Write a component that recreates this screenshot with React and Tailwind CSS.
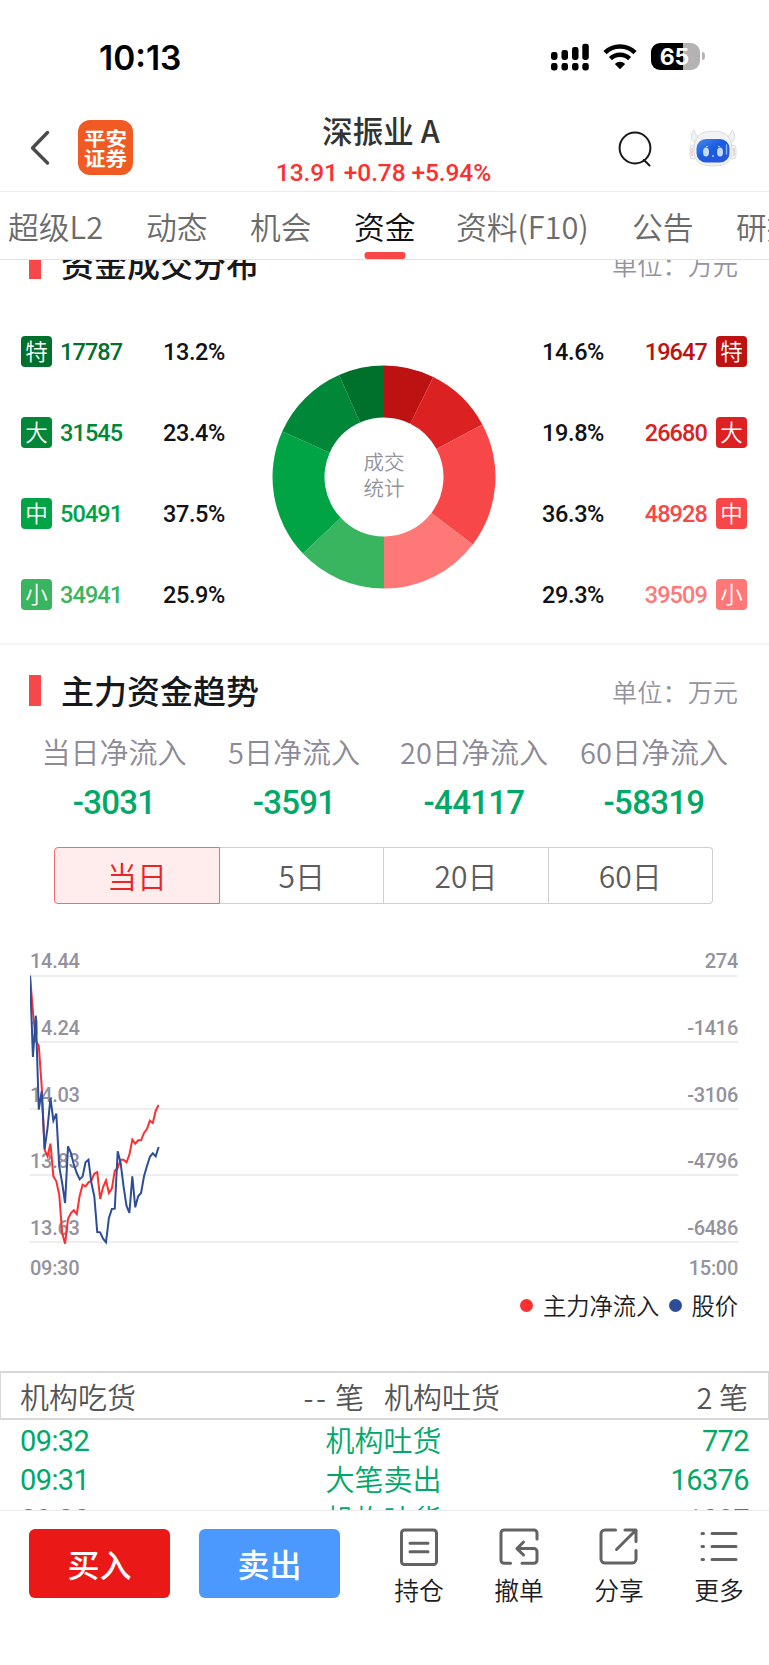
const SELL = [
  { tag: "特", value: "17787", pct: "13.2%", bg: "bg-[#00702d]", text: "text-[#00702d]", fill: "#00702d" },
  { tag: "大", value: "31545", pct: "23.4%", bg: "bg-[#008738]", text: "text-[#008738]", fill: "#008738" },
  { tag: "中", value: "50491", pct: "37.5%", bg: "bg-[#00a444]", text: "text-[#00a444]", fill: "#00a444" },
  { tag: "小", value: "34941", pct: "25.9%", bg: "bg-[#39b560]", text: "text-[#39b560]", fill: "#39b560" },
];

const BUY = [
  { tag: "特", value: "19647", pct: "14.6%", bg: "bg-[#bd1212]", text: "text-[#bd1212]", fill: "#bd1212" },
  { tag: "大", value: "26680", pct: "19.8%", bg: "bg-[#db2122]", text: "text-[#db2122]", fill: "#db2122" },
  { tag: "中", value: "48928", pct: "36.3%", bg: "bg-[#f84748]", text: "text-[#f84748]", fill: "#f84748" },
  { tag: "小", value: "39509", pct: "29.3%", bg: "bg-[#ff7878]", text: "text-[#ff7878]", fill: "#ff7878" },
];

const TABS = [
  { label: "超级L2", width: "w-[138px]" },
  { label: "动态", width: "w-[104px]" },
  { label: "机会", width: "w-[104px]" },
  { label: "资金", width: "w-[102px]", active: true },
  { label: "资料(F10)", width: "w-[176px]" },
  { label: "公告", width: "w-[104px]" },
  { label: "研报", width: "w-[80px]" },
];

const STATS = [
  { label: "当日净流入", value: "-3031" },
  { label: "5日净流入", value: "-3591" },
  { label: "20日净流入", value: "-44117" },
  { label: "60日净流入", value: "-58319" },
];

const AXIS = [
  ["14.44", "274"],
  ["14.24", "-1416"],
  ["14.03", "-3106"],
  ["13.83", "-4796"],
  ["13.63", "-6486"],
];

// one point per minute, 0 = top grid line, 800 = bottom grid line
const FLOW = [
  2, 110, 199, 212, 334, 524, 544, 506, 604, 619, 659, 774, 806, 732, 714, 706,
  717, 662, 629, 634, 622, 617, 596, 591, 672, 636, 616, 654, 641, 587, 579,
  554, 554, 562, 539, 494, 506, 496, 496, 474, 462, 437, 444, 407, 390,
];
const PRICE = [
  2, 246, 122, 404, 349, 522, 459, 369, 437, 416, 574, 624, 684, 514, 534, 569,
  594, 613, 604, 562, 554, 624, 664, 771, 772, 791, 802, 729, 702, 701, 529,
  564, 634, 692, 714, 604, 697, 664, 654, 604, 574, 546, 535, 544, 516,
];

const RECORDS = [
  ["09:32", "机构吐货", "772"],
  ["09:31", "大笔卖出", "16376"],
  ["09:30", "机构吐货", "1087"],
];

const toPoints = (list) => list.map((y, i) => `${i * 8.77},${y}`).join(" ");

function Donut() {
  const R = 111.5;
  const r = 59.5;
  const total = 269528;
  const parts = [...BUY, ...[...SELL].reverse()];
  let angle = 0;
  const at = (radius, a) =>
    `${112 + radius * Math.sin(a)} ${112 - radius * Math.cos(a)}`;
  return (
    <svg viewBox="0 0 224 224" className="w-[224px] h-[224px]">
      {parts.map((p) => {
        const a = angle;
        const b = a + (Number(p.value) / total) * Math.PI * 2;
        angle = b;
        return (
          <path
            key={p.fill}
            fill={p.fill}
            d={`M${at(R, a)}A${R} ${R} 0 0 1 ${at(R, b)}L${at(r, b)}A${r} ${r} 0 0 0 ${at(r, a)}Z`}
          />
        );
      })}
    </svg>
  );
}

function Badge({ item }) {
  return (
    <span
      className={`${item.bg} w-[31px] h-[31px] rounded-[4px] text-white text-[22.5px] leading-[32px] text-center tracking-normal font-[350]`}
    >
      {item.tag}
    </span>
  );
}

function SectionTitle({ title }) {
  return (
    <div className="h-[94px] pl-[29px] pr-[31px] flex items-center">
      <span className="w-3 h-[31px] bg-[#f84748] mb-[3px]" />
      <h2 className="ml-5 mb-[2px] text-[33px] font-medium text-[#17181c]">{title}</h2>
      <span className="ml-auto mb-[1px] text-[25.2px] font-[350] text-[#93929d]">单位：万元</span>
    </div>
  );
}

function StatusBar() {
  return (
    <div className="h-[100px] pt-[38px] flex">
      <span className="ml-[99px] w-[452px] h-[40px] leading-[40px] font-[Inter] font-semibold text-[33.5px] text-black">
        10:13
      </span>
      <svg viewBox="0 0 38 28" className="w-[38px] h-[28px] mt-[5px]">
        {[0, 10.5, 21, 31.3].map((x, i) => (
          <g key={x}>
            <rect x={x} y={[9, 7, 4, 0.8][i]} width="6.5" height={[8, 10, 13, 16.2][i]} rx="2.4" />
            <rect x={x} y="20" width="6.5" height="7.5" rx="2.4" />
          </g>
        ))}
      </svg>
      <svg viewBox="0 0 34 26" className="w-[34px] h-[26px] ml-[14px] mt-[6px]" fill="none" stroke="#000">
        <path d="M2 8.6a21.5 21.5 0 0 1 30 0" strokeWidth="4.6" />
        <path d="M7.4 14.6a13.8 13.8 0 0 1 19.2 0" strokeWidth="4.4" />
        <path d="M17 25.3l-5.2-5.4a7.6 7.6 0 0 1 10.4 0z" fill="#000" stroke="none" />
      </svg>
      <div className="ml-[14px] mt-[5px] w-[49px] h-[27px] rounded-[9px] overflow-hidden bg-[linear-gradient(to_right,#000_65%,#b3b3b3_65%)] text-white font-[Inter] font-bold text-[23px] leading-[28px] pr-[2px] text-center">
        65
      </div>
      <span className="ml-[2px] mt-[14px] w-[3px] h-[8px] rounded-r-full bg-[#b3b3b3]" />
    </div>
  );
}

function Robot() {
  return (
    <svg viewBox="0 0 48 40" className="w-[48px] h-[40px]">
      <defs>
        <linearGradient id="face" x1="0" y1="0" x2="1" y2="1">
          <stop offset="0" stopColor="#4a8af0" />
          <stop offset=".45" stopColor="#1a5ce0" />
          <stop offset="1" stopColor="#2a55d8" />
        </linearGradient>
      </defs>
      <g fill="#f1f2f4" stroke="#d3d5da" strokeWidth=".8">
        <path d="M5 2C1 6 1 14 8 16l5-7C8 9 6 6 5 2zM43 2c4 4 4 12-3 14l-5-7c5 0 7-3 8-7z" />
        <rect x="1" y="17" width="7" height="14" rx="3" />
        <rect x="40" y="17" width="7" height="14" rx="3" />
        <path d="M24 3c13 0 19 6 19 19 0 12-6 16-19 16S5 34 5 22C5 9 11 3 24 3z" />
      </g>
      <path d="M3 20v8M45 20v8" stroke="#f1b4ac" strokeWidth="1" />
      <rect x="7.5" y="11" width="33" height="23.5" rx="9.5" fill="url(#face)" />
      <path d="M37.5 17v9" stroke="#8fb2ff" strokeWidth="1.4" strokeLinecap="round" />
      <ellipse cx="17" cy="24" rx="3" ry="4.6" fill="#c5dbf5" />
      <ellipse cx="31" cy="24" rx="3" ry="4.6" fill="#c5dbf5" />
      <circle cx="24" cy="28" r=".9" fill="#c5dbf5" />
      <path d="M17 18.5h2M29 18.5h2" stroke="#8fd0ff" strokeWidth="1" />
    </svg>
  );
}

function Header() {
  return (
    <header className="h-[92px] border-b border-[#ebebeb] flex">
      <svg viewBox="0 0 20 36" className="w-[20px] h-[36px] ml-[30px] mt-[30px]" fill="none" stroke="#4a4a4a" strokeWidth="3.4" strokeLinecap="round" strokeLinejoin="round">
        <path d="M17.5 2.5 2.5 18l15 15" />
      </svg>
      <div className="ml-[28px] mt-[20px] w-[55px] h-[55px] rounded-[12px] bg-[#f15a22] flex items-center justify-center">
        <span className="text-white font-bold text-[21.5px] leading-[22px] text-center scale-y-[.88]">
          平安
          <br />
          证券
        </span>
      </div>
      <div className="ml-[128px] w-[245px] text-center">
        <div className="mt-[11px] -ml-[5px] h-[38px] leading-[38px] text-[30.5px] font-medium text-[#333]">
          深振业<span className="ml-[7px]">A</span>
        </div>
        <div className="mt-[8px] h-[32px] leading-[32px] num text-[24.5px] font-medium tracking-[-0.1px] text-[#fc3030] whitespace-nowrap">
          13.91 +0.78 +5.94%
        </div>
      </div>
      <svg viewBox="0 0 34 36" className="w-[34px] h-[36px] ml-[112px] mt-[31px]" fill="none" stroke="#16171b" strokeWidth="2">
        <circle cx="17" cy="17" r="15.4" />
        <path d="m26 29 5.5 5.5" strokeLinecap="round" />
      </svg>
      <div className="ml-[37px] mt-[28px]">
        <Robot />
      </div>
    </header>
  );
}

function Tabs() {
  return (
    <nav className="h-[68px] border-b border-[#e2e2e4] pl-[8px] flex overflow-hidden">
      {TABS.map((t) => (
        <div
          key={t.label}
          className={`${t.width} shrink-0 whitespace-nowrap text-[30.8px] leading-[68px] font-[350] ${
            t.active ? "text-[#111216]" : "text-[#6b6b6b]"
          }`}
        >
          <span className="relative inline-block">
            {t.label}
            {t.active && (
              <span className="absolute left-1/2 -translate-x-1/2 bottom-[1px] w-[41px] h-[7px] rounded-[3px] bg-[#f84748]" />
            )}
          </span>
        </div>
      ))}
    </nav>
  );
}

function Distribution() {
  return (
    <section className="h-[427px] border-t-2 border-[#f5f5f7] -mt-[44px]">
      <SectionTitle title="资金成交分布" />
      <div className="-mt-[1px] flex num text-[23.5px] font-medium">
        <div className="w-[272px] pl-[21px]">
          {SELL.map((s) => (
            <div key={s.tag} className="h-[81px] flex items-center">
              <Badge item={s} />
              <span className={`${s.text} ml-[8px] mt-[2px] w-[103px] tracking-[-0.9px]`}>{s.value}</span>
              <span className="mt-[2px] text-[#111216] tracking-[-0.4px]">{s.pct}</span>
            </div>
          ))}
        </div>
        <div className="relative w-[224px] mt-[54px] h-[224px]">
          <Donut />
          <div className="absolute inset-0 flex items-center justify-center text-center text-[20.5px] leading-[25.5px] font-[350] text-[#93929d] pb-[1px]">
            成交
            <br />
            统计
          </div>
        </div>
        <div className="w-[273px] pr-[22px]">
          {BUY.map((s) => (
            <div key={s.tag} className="h-[81px] flex items-center justify-end">
              <span className="mt-[2px] text-[#111216] tracking-[-0.4px]">{s.pct}</span>
              <span className={`${s.text} mt-[2px] w-[103px] mr-[9px] text-right tracking-[-0.9px]`}>{s.value}</span>
              <Badge item={s} />
            </div>
          ))}
        </div>
      </div>
    </section>
  );
}

function Trend() {
  return (
    <section className="border-t-2 border-[#f5f5f7]">
      <SectionTitle title="主力资金趋势" />
      <div className="grid grid-cols-4 w-[720px] ml-[24px] text-center">
        {STATS.map((s) => (
          <div key={s.label}>
            <div className="h-[28px] leading-[25px] text-[29px] font-[350] text-[#8b8a96] whitespace-nowrap">
              {s.label}
            </div>
            <div className="mt-[18px] h-[36px] leading-[36px] text-[33px] font-medium tracking-[-0.7px] text-[#00a968] num">
              {s.value}
            </div>
          </div>
        ))}
      </div>

      <div className="mt-[26px] ml-[54px] w-[659px] h-[57px] flex text-[30px] leading-[55px] text-center text-[#5c5c5c] font-[350]">
        <div className="w-[166px] border border-[#f26a6b] bg-[#ffeded] rounded-l-[4px] text-[#e62727]">
          当日
        </div>
        {["5日", "20日", "60日"].map((t) => (
          <div key={t} className="flex-1 border border-l-0 border-[#cfcfcf] last:rounded-r-[4px]">
            {t}
          </div>
        ))}
      </div>

      <div className="relative mt-[6px] ml-[30px] mr-[31px] num text-[20px] font-medium text-[#93929d] tracking-[-0.3px]">
        {AXIS.map(([l, r]) => (
          <div
            key={l}
            className="h-[66.6px] border-b-2 border-[#eeeeef] flex items-end justify-between pb-[1.2px] leading-[24px]"
          >
            <span>{l}</span>
            <span>{r}</span>
          </div>
        ))}
        <svg
          viewBox="0 0 2130 810"
          className="absolute left-0 top-[65px] w-[710px] h-[270px]"
          fill="none"
          strokeWidth="6"
          strokeLinejoin="miter"
        >
          <polyline points={toPoints(FLOW)} stroke="#fc3030" />
          <polyline points={toPoints(PRICE)} stroke="#2d4d97" />
        </svg>
      </div>
      <div className="mt-[12px] pl-[30px] pr-[31px] flex justify-between num text-[20px] leading-[26px] font-medium tracking-[-0.3px] text-[#93929d]">
        <span>09:30</span>
        <span>15:00</span>
      </div>
      <div className="mt-[10px] mb-[1px] h-[30px] pr-[31px] flex items-center justify-end text-[23.3px] leading-[28px] font-[350] text-[#1c1d21]">
        <span className="w-[13px] h-[13px] rounded-full bg-[#fc3030] mr-[10px]" />
        <span className="mb-[2px]">主力净流入</span>
        <span className="w-[13px] h-[13px] rounded-full bg-[#2d4d97] ml-[10px] mr-[9px]" />
        <span className="mb-[2px]">股价</span>
      </div>
    </section>
  );
}

function Orders() {
  return (
    <section className="mt-[50px] text-[29px] font-[350]">
      <div className="h-[49px] border-2 border-x border-[#d8d8d8] pl-[19px] pr-[20px] flex leading-[46px] text-[#555]">
        <span className="w-[230px]">机构吃货</span>
        <span className="w-[114px] text-right">
          <span className="tracking-[2.6px]">--</span> 笔
        </span>
        <span className="ml-[20px]">机构吐货</span>
        <span className="ml-auto">2 笔</span>
      </div>
      <div className="text-[#00a968]">
        {RECORDS.map(([time, name, n]) => (
          <div key={time} className="h-[39.4px] px-[20px] grid grid-cols-3">
            <span className="num font-normal leading-[42px] tracking-[-0.6px]">{time}</span>
            <span className="leading-[39px] text-center -ml-[2px]">{name}</span>
            <span className="num font-normal leading-[42px] text-right tracking-[-0.6px]">{n}</span>
          </div>
        ))}
      </div>
    </section>
  );
}

function Action({ label, children }) {
  return (
    <div className="w-[100px] flex flex-col items-center">
      <svg viewBox="0 0 40 40" className="w-[40px] h-[40px]" fill="none" stroke="#636363" strokeWidth="3" strokeLinecap="round" strokeLinejoin="round">
        {children}
      </svg>
      <span className="mt-[6px] text-[24.8px] leading-[32px] font-[350] text-[#1c1d21]">{label}</span>
    </div>
  );
}

function Footer() {
  return (
    <footer className="h-[155px] border-t border-[#ebebeb] flex pl-[29px]">
      <button className="mt-[18px] w-[141px] h-[69px] pb-[2px] rounded-[6px] bg-[#eb1818] text-white text-[32px] font-medium">
        买入
      </button>
      <button className="mt-[18px] ml-[29px] w-[141px] h-[69px] pb-[2px] rounded-[6px] bg-[#4b99ff] text-white text-[32px] font-medium">
        卖出
      </button>
      <div className="ml-[29px] mt-[16px] flex">
        <Action label="持仓">
          <rect x="2.5" y="3" width="35" height="34.5" rx="3" />
          <path d="M11 16.3h18M11 24.7h18" />
        </Action>
        <Action label="撤单">
          <path d="M38 12V6a3 3 0 0 0-3-3H5a3 3 0 0 0-3 3v27.3a3 3 0 0 0 3 3h6.5" />
          <path d="M23 36.3H35a3 3 0 0 0 3-3V24.6a3 3 0 0 0-3-3H18.5M24.5 15l-6.5 6.6L24.5 28" />
        </Action>
        <Action label="分享">
          <path d="M16.5 3H6a4 4 0 0 0-4 4v25a4 4 0 0 0 4 4H33a4 4 0 0 0 4-4v-8.5" />
          <path d="M26 3h11v11.5M36 4 17.5 22.5" />
        </Action>
        <Action label="更多">
          <path d="M3 6.5h1.5M13 6.5h24M3 19.5h1.5M13 19.5h24M3 32.5h1.5M13 32.5h24" />
        </Action>
      </div>
    </footer>
  );
}

export default function App() {
  return (
    <div className="w-[769px] h-[1665px] overflow-hidden bg-white flex flex-col font-['Noto_Sans_CJK_SC',sans-serif] [&_.num]:font-['Roboto','Noto_Sans_CJK_SC',sans-serif]">
      <StatusBar />
      <Header />
      <Tabs />
      <main className="h-[1250px] shrink-0 overflow-hidden">
        <Distribution />
        <Trend />
        <Orders />
      </main>
      <Footer />
    </div>
  );
}
